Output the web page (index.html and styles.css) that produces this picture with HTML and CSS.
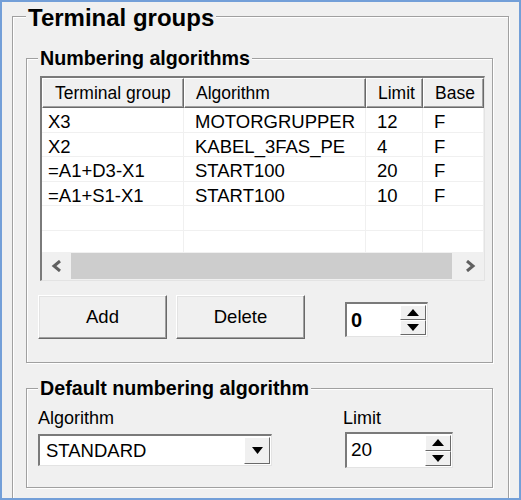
FILE: index.html
```html
<!DOCTYPE html>
<html lang="en">
<head>
    <meta charset="UTF-8">
    <meta name="viewport" content="width=device-width, initial-scale=1.0">
    <title>Terminal groups</title>
    <link rel="stylesheet" href="styles.css">
</head>
<body>

    <div class="window">
        <fieldset class="group group-main">
            <legend class="title-lg">Terminal groups</legend>

            <fieldset class="group group-numbering">
                <legend class="title">Numbering algorithms</legend>

                <div class="listview">
                    <div class="lv-header">
                        <div class="lv-head col-group">Terminal group</div>
                        <div class="lv-head col-algo">Algorithm</div>
                        <div class="lv-head col-limit">Limit</div>
                        <div class="lv-head col-base">Base</div>
                    </div>
                    <div class="lv-body">
                        <div class="lv-row">
                            <div class="lv-cell col-group">X3</div>
                            <div class="lv-cell col-algo">MOTORGRUPPER</div>
                            <div class="lv-cell col-limit">12</div>
                            <div class="lv-cell col-base">F</div>
                        </div>
                        <div class="lv-row">
                            <div class="lv-cell col-group">X2</div>
                            <div class="lv-cell col-algo">KABEL_3FAS_PE</div>
                            <div class="lv-cell col-limit">4</div>
                            <div class="lv-cell col-base">F</div>
                        </div>
                        <div class="lv-row">
                            <div class="lv-cell col-group">=A1+D3-X1</div>
                            <div class="lv-cell col-algo">START100</div>
                            <div class="lv-cell col-limit">20</div>
                            <div class="lv-cell col-base">F</div>
                        </div>
                        <div class="lv-row">
                            <div class="lv-cell col-group">=A1+S1-X1</div>
                            <div class="lv-cell col-algo">START100</div>
                            <div class="lv-cell col-limit">10</div>
                            <div class="lv-cell col-base">F</div>
                        </div>
                        <div class="lv-row">
                            <div class="lv-cell col-group"></div>
                            <div class="lv-cell col-algo"></div>
                            <div class="lv-cell col-limit"></div>
                            <div class="lv-cell col-base"></div>
                        </div>
                        <div class="lv-row">
                            <div class="lv-cell col-group"></div>
                            <div class="lv-cell col-algo"></div>
                            <div class="lv-cell col-limit"></div>
                            <div class="lv-cell col-base"></div>
                        </div>
                        <div class="lv-row">
                            <div class="lv-cell col-group"></div>
                            <div class="lv-cell col-algo"></div>
                            <div class="lv-cell col-limit"></div>
                            <div class="lv-cell col-base"></div>
                        </div>
                    </div>
                    <div class="hscroll">
                        <div class="scroll-btn">
                            <svg width="12" height="12" viewBox="0 0 12 12"><polyline points="9,1 3,6 9,11" fill="none" stroke="#606060" stroke-width="3"/></svg>
                        </div>
                        <div class="scroll-track">
                            <div class="scroll-thumb"></div>
                        </div>
                        <div class="scroll-btn">
                            <svg width="12" height="12" viewBox="0 0 12 12"><polyline points="3,1 9,6 3,11" fill="none" stroke="#606060" stroke-width="3"/></svg>
                        </div>
                    </div>
                </div>

                <div class="actions">
                    <button class="btn">Add</button>
                    <button class="btn">Delete</button>
                    <div class="spinner spinner-small">
                        <span class="spin-value bold">0</span>
                        <div class="spin-btns">
                            <div class="spin-btn">
                                <svg width="12" height="7" viewBox="0 0 12 7"><polygon points="6,0 12,7 0,7" fill="#000"/></svg>
                            </div>
                            <div class="spin-btn">
                                <svg width="12" height="7" viewBox="0 0 12 7"><polygon points="0,0 12,0 6,7" fill="#000"/></svg>
                            </div>
                        </div>
                    </div>
                </div>
            </fieldset>

            <fieldset class="group group-default">
                <legend class="title">Default numbering algorithm</legend>
                <div class="field-row">
                    <div class="field field-algo">
                        <label class="field-label">Algorithm</label>
                        <div class="combo">
                            <span class="combo-value">STANDARD</span>
                            <div class="combo-btn">
                                <svg width="11" height="7" viewBox="0 0 11 7"><polygon points="0,0 11,0 5.5,7" fill="#000"/></svg>
                            </div>
                        </div>
                    </div>
                    <div class="field field-limit">
                        <label class="field-label">Limit</label>
                        <div class="spinner spinner-wide">
                            <span class="spin-value">20</span>
                            <div class="spin-btns">
                                <div class="spin-btn">
                                    <svg width="12" height="7" viewBox="0 0 12 7"><polygon points="6,0 12,7 0,7" fill="#000"/></svg>
                                </div>
                                <div class="spin-btn">
                                    <svg width="12" height="7" viewBox="0 0 12 7"><polygon points="0,0 12,0 6,7" fill="#000"/></svg>
                                </div>
                            </div>
                        </div>
                    </div>
                </div>
            </fieldset>
        </fieldset>
    </div>

</body>
</html>
```

FILE: styles.css
```css
body {
    margin: 0;
    background-color: #f0f0f0;
}

.window {
    width: 521px;
    height: 500px;
    box-sizing: border-box;
    border: 2px solid #739fd8;
    background-color: #f0f0f0;
    overflow: hidden;
    font-family: "Liberation Sans", Arial, sans-serif;
    font-size: 18px;
    color: #000;
}

/* group boxes */
.group {
    margin: 0;
    border: 1px solid #a0a0a0;
    box-shadow: inset 1px 1px #fff, 1px 1px #fff;
    min-width: 0;
    box-sizing: border-box;
}

.group legend {
    background-color: #f0f0f0;
    font-weight: bold;
    font-family: "Liberation Sans", Arial, sans-serif;
}

.title-lg {
    font-size: 24px;
    line-height: 24px;
    padding: 4px 2px 0;
}

.title {
    font-size: 19.7px;
    line-height: 22px;
    padding: 0 2px;
    margin-left: -2px;
}

.group-main {
    width: 497px;
    margin-left: 10px;
    padding: 17px 14px 40px 13px;
}

.group-numbering {
    width: 467px;
    padding: 7px 7px 23px 13px;
}

.group-default {
    width: 467px;
    margin-top: 14px;
    padding: 7px 7px 19px 13px;
}

/* list view */
.listview {
    width: 445px;
    height: 205px;
    box-sizing: border-box;
    border-style: solid;
    border-width: 2px 1px 1px 2px;
    border-color: #7a7a7a #e3e3e3 #e3e3e3 #7a7a7a;
    background-color: #fff;
    display: flex;
    flex-direction: column;
    overflow: hidden;
}

.lv-header {
    display: flex;
    height: 30px;
    flex-shrink: 0;
}

.lv-head {
    box-sizing: border-box;
    height: 30px;
    line-height: 28px;
    font-size: 17.5px;
    background-color: #f0f0f0;
    border: 1px solid;
    border-color: #fff #696969 #696969 #fff;
    box-shadow: inset -1px -1px #a0a0a0;
    padding-left: 11px;
    white-space: nowrap;
    overflow: hidden;
}

.col-group { width: 142px; flex-shrink: 0; }
.col-algo { width: 182px; flex-shrink: 0; }
.col-limit { width: 57px; flex-shrink: 0; }
.col-base { flex: 1; }

.lv-header .col-group { padding-left: 12px; }

.lv-body {
    flex: 1;
    overflow: hidden;
}

.lv-row {
    display: flex;
    height: 24.5px;
    box-sizing: border-box;
    border-bottom: 1px solid #f0f0f0;
}

.lv-cell {
    box-sizing: border-box;
    border-right: 1px solid #f0f0f0;
    padding-left: 11px;
    font-size: 18.5px;
    line-height: 27px;
    white-space: nowrap;
}

.lv-row .col-group { padding-left: 6px; }

/* horizontal scroll bar */
.hscroll {
    display: flex;
    height: 28px;
    flex-shrink: 0;
    background-color: #f0f0f0;
    padding: 1px 0;
    box-sizing: border-box;
}

.scroll-btn {
    width: 29px;
    display: flex;
    align-items: center;
    justify-content: center;
}

.scroll-track {
    flex: 1;
    display: flex;
    padding-right: 3px;
}

.scroll-thumb {
    flex: 1;
    background-color: #cdcdcd;
}

/* buttons */
.actions {
    display: flex;
    align-items: flex-start;
    margin: 14px 0 0 -2px;
}

.btn {
    width: 129px;
    height: 44px;
    margin-right: 9px;
    font-family: "Liberation Sans", Arial, sans-serif;
    font-size: 18.5px;
    color: #000;
    background-color: #f0f0f0;
    border: 1px solid;
    border-color: #fff #696969 #696969 #fff;
    box-shadow: inset -1px -1px #a0a0a0, inset 1px 1px #e3e3e3;
    padding: 0;
}

/* spinners */
.spinner {
    display: flex;
    box-sizing: border-box;
    background-color: #fff;
    border-style: solid;
    border-width: 2px 1px 1px 2px;
    border-color: #7a7a7a #e3e3e3 #e3e3e3 #7a7a7a;
    padding: 1px 1px 1px 4px;
}

.spinner-small {
    width: 83px;
    height: 35px;
    margin-top: 7px;
    margin-left: 31px;
}

.spinner-wide {
    width: 108px;
    height: 36px;
    margin-top: 2px;
    margin-left: 2px;
}

.spin-value {
    flex: 1;
    font-size: 19px;
    line-height: 30px;
}

.spin-value.bold {
    font-weight: bold;
    font-size: 20px;
}

.spin-btns {
    width: 26px;
    display: flex;
    flex-direction: column;
}

.spin-btn {
    flex: 1;
    display: flex;
    align-items: center;
    justify-content: center;
    background-color: #f0f0f0;
    border: 1px solid;
    border-color: #fff #696969 #696969 #fff;
    box-sizing: border-box;
}

/* default algorithm fields */
.field-row {
    display: flex;
    align-items: flex-start;
    margin-left: -2px;
}

.field {
    display: flex;
    flex-direction: column;
}

.field-algo {
    width: 234px;
    margin-right: 71px;
}

.field-label {
    line-height: 24px;
    font-size: 18px;
}

.combo {
    display: flex;
    height: 32px;
    margin-top: 4px;
    box-sizing: border-box;
    background-color: #fff;
    border-style: solid;
    border-width: 2px 1px 1px 2px;
    border-color: #7a7a7a #e3e3e3 #e3e3e3 #7a7a7a;
    padding: 1px;
}

.combo-value {
    flex: 1;
    padding-left: 5px;
    font-size: 18.5px;
    line-height: 27px;
}

.combo-btn {
    width: 26px;
    display: flex;
    align-items: center;
    justify-content: center;
    background-color: #f0f0f0;
    border: 1px solid;
    border-color: #fff #696969 #696969 #fff;
    box-sizing: border-box;
}
```
